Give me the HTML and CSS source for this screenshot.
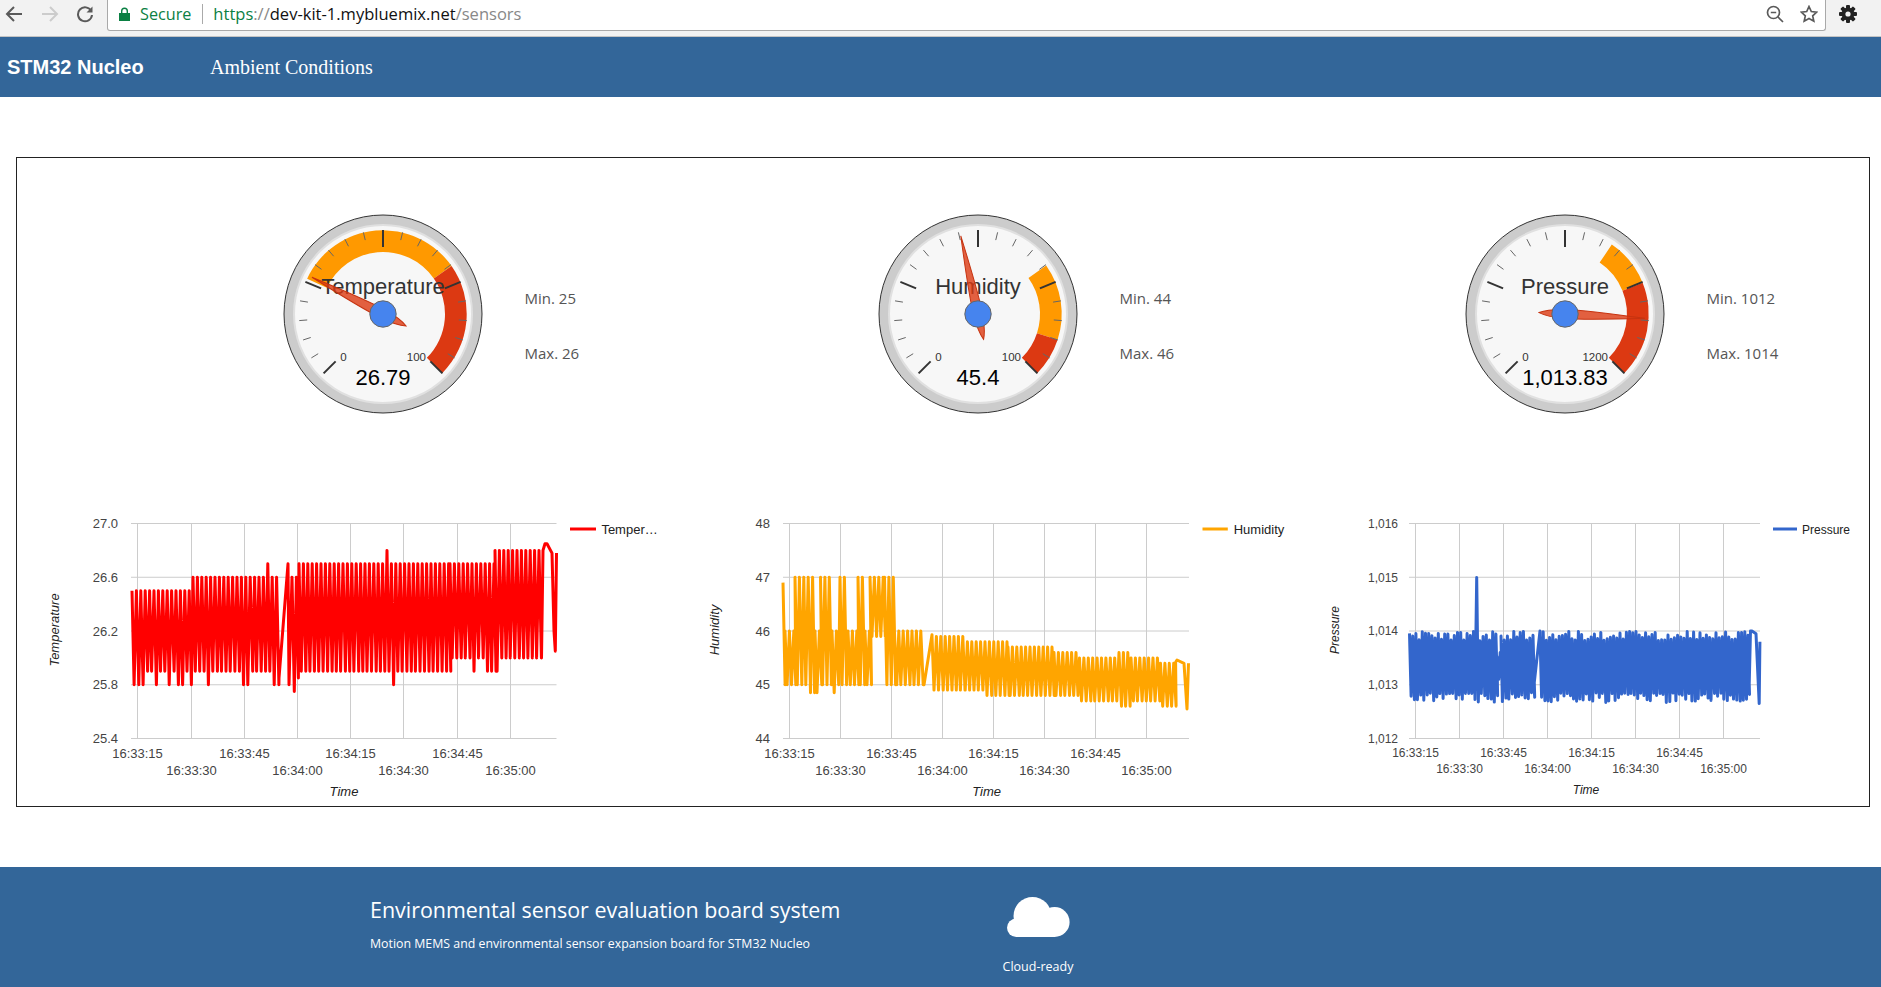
FILE: index.html
```html
<!DOCTYPE html>
<html lang="en">
<head>
  <meta charset="UTF-8">
  <title>STM32 Nucleo - Ambient Conditions</title>
  <link rel="stylesheet" href="styles.css">
</head>
<body>
  <!-- Browser toolbar -->
  <div class="toolbar">
    <div class="nav-buttons">
      <svg class="tool-icon" width="18" height="18" viewBox="0 0 18 18">
        <path class="arrow" d="M17 9H2M9 2L2 9l7 7"/>
      </svg>
      <svg class="tool-icon tool-icon-off" width="18" height="18" viewBox="0 0 18 18">
        <path class="arrow" d="M1 9h15M9 2l7 7-7 7"/>
      </svg>
      <svg class="tool-icon tool-reload" width="18" height="18" viewBox="0 0 18 18">
        <path class="arrow" d="M15.2 6A7 7 0 1 0 16 10"/>
        <path class="solid" d="M16.5 1.5v6h-6z"/>
      </svg>
    </div>
    <div class="address">
      <svg class="lock" width="11" height="14" viewBox="0 0 11 14">
        <path d="M0 6h11v8H0zM2 6V4a3.5 3.5 0 0 1 7 0v2H7.6V4a2.1 2.1 0 0 0-4.200 0v2z"/>
      </svg>
      <span class="secure">Secure</span>
      <span class="url"><span class="url-scheme">https</span><span class="url-path">://</span><span class="url-host">dev-kit-1.mybluemix.net</span><span class="url-path">/sensors</span></span>
      <svg class="address-icon" width="18" height="18" viewBox="0 0 18 18">
        <circle class="line" cx="7.500" cy="7.500" r="6"/>
        <path class="line" d="M4.800 7.500h5.400M12 12l5 5"/>
      </svg>
      <svg class="address-icon" width="18" height="18" viewBox="0 0 18 18">
        <path class="line" d="M9 1.500l2.300 5 5.400.6-4 3.700 1.100 5.400L9 13.500l-4.800 2.700 1.100-5.400-4-3.700 5.400-.6z"/>
      </svg>
    </div>
    <svg class="gear" width="18" height="18" viewBox="0 0 18 18">
      <rect x="7" y="0" width="4" height="18" rx="1"/>
      <rect x="7" y="0" width="4" height="18" rx="1" transform="rotate(45 9 9)"/>
      <rect x="7" y="0" width="4" height="18" rx="1" transform="rotate(90 9 9)"/>
      <rect x="7" y="0" width="4" height="18" rx="1" transform="rotate(135 9 9)"/>
      <circle cx="9" cy="9" r="6.500"/>
      <circle class="gear-hole" cx="9" cy="9" r="2.600"/>
    </svg>
  </div>

  <!-- Top navigation -->
  <nav class="navbar">
    <a class="brand">STM32 Nucleo</a>
    <a class="nav-link">Ambient Conditions</a>
  </nav>

  <!-- Sensors panel, filled in by sensors.js -->
  <main class="panel">
    <div class="gauges" id="gauges"></div>
    <div class="charts" id="charts"></div>
  </main>

  <footer class="footer">
    <div class="footer-text">
      <h2>Environmental sensor evaluation board system</h2>
      <p>Motion MEMS and environmental sensor expansion board for STM32 Nucleo</p>
    </div>
    <div class="feature">
      <svg class="cloud" width="63" height="40" viewBox="0 0 63 40">
        <circle cx="25.500" cy="19" r="19"/>
        <circle cx="47.600" cy="25" r="15"/>
        <circle cx="9.200" cy="30.800" r="9.200"/>
        <rect x="9" y="20" width="39" height="20"/>
      </svg>
      <span>Cloud-ready</span>
    </div>
  </footer>

  <script src="sensors.js"></script>
</body>
</html>
```

FILE: styles.css
```css
/* Root Variables */
:root {
  --primary-color: #336699;
  --text-grey: #555;
  --page-font: "Open Sans", "Noto Sans", sans-serif;
  --chart-font: "Liberation Sans", Arial, sans-serif;
}

/* Global Styles */
* {
  box-sizing: border-box;
}

body {
  margin: 0;
  padding: 0;
  height: 987px;
  overflow: hidden;
  background: #fff;
  font-family: var(--page-font);
}

/* Browser Toolbar */
.toolbar {
  display: flex;
  height: 37px;
  background: #f2f2f2;
  border-bottom: 1px solid #c4c4c4;
  align-items: flex-start;
}

.nav-buttons {
  display: flex;
  gap: 18px;
  width: 107px;
  padding: 5px 0 0 5px;
}

.tool-icon .arrow {
  fill: none;
  stroke: #5a5a5a;
  stroke-width: 2;
}

.tool-icon .solid {
  fill: #5a5a5a;
}

.tool-icon-off .arrow {
  stroke: #ccc;
}

.tool-reload {
  margin-left: -1px;
}

.address {
  display: flex;
  align-items: center;
  width: 1719px;
  height: 31px;
  padding: 0 7px 3px 11px;
  background: #fff;
  border: 1px solid #a9a9a9;
  border-top: none;
  border-radius: 0 0 3px 3px;
  font-size: 16.2px;
}

.lock {
  fill: #0b8043;
  margin-right: 10px;
}

.secure {
  color: #0b8043;
  padding-right: 11px;
  border-right: 1px solid #aaa;
  line-height: 20px;
}

.url {
  flex: 1;
  padding-left: 10px;
  font-size: 16.55px;
  white-space: nowrap;
}

.url-scheme {
  color: #0b8043;
}

.url-host {
  color: #111;
}

.url-path {
  color: #888;
}

.address-icon {
  margin-left: 16px;
}

.address-icon .line {
  fill: none;
  stroke: #5a5a5a;
  stroke-width: 1.700;
}

.gear {
  margin: 5px 0 0 13px;
  fill: #222;
}

.gear .gear-hole {
  fill: #f2f2f2;
}

/* Navigation */
.navbar {
  display: flex;
  align-items: center;
  height: 60px;
  background: var(--primary-color);
  color: #fff;
}

.brand {
  font-family: var(--chart-font);
  font-size: 20px;
  font-weight: 700;
  margin-left: 7px;
  width: 203px;
}

.nav-link {
  font-family: "Liberation Serif", "Times New Roman", serif;
  font-size: 20px;
}

/* Panel */
.panel {
  height: 650px;
  margin: 60px 11px 60px 16px;
  border: 1px solid #222;
}

.gauges {
  display: grid;
  grid-template-columns: 595px 587px 1fr;
  height: 342px;
  padding: 56px 0 0 266px;
}

.gauge-cell {
  display: flex;
  align-items: flex-start;
}

.stats {
  margin: 57px 0 0 41.5px;
  color: var(--text-grey);
  font-size: 15px;
  line-height: 55px;
  white-space: nowrap;
}

.charts {
  display: grid;
  grid-template-columns: 640px 640px 1fr;
}

.charts svg {
  display: block;
}

/* Gauge Parts */
.gauge-rim {
  fill: #ccc;
  stroke: #333;
  stroke-width: 1;
}

.gauge-face {
  fill: #f7f7f7;
  stroke: #e0e0e0;
  stroke-width: 2;
}

.zone-yellow {
  fill: #ff9900;
}

.zone-red {
  fill: #dc3912;
}

.tick-major {
  stroke: #333;
  stroke-width: 2;
}

.tick-minor {
  stroke: #666;
  stroke-width: 1;
}

.gauge-title,
.gauge-value,
.gauge-scale {
  font-family: var(--chart-font);
}

.gauge-title {
  font-size: 22px;
  fill: #333;
  text-anchor: middle;
}

.gauge-value {
  font-size: 22px;
  fill: #000;
  text-anchor: middle;
}

.gauge-scale {
  font-size: 11.5px;
  fill: #333;
}

.needle {
  fill: #dc3912;
  fill-opacity: 0.8;
  stroke: #c63310;
  stroke-width: 1;
}

.needle-hub {
  fill: #4684ee;
  stroke: #666;
  stroke-width: 1;
}

/* Chart Parts */
.chart-text {
  font-family: var(--chart-font);
  fill: #444;
}

.chart-title {
  font-family: var(--chart-font);
  font-style: italic;
  fill: #222;
}

.legend-text {
  font-family: var(--chart-font);
  fill: #222;
}

.grid-line {
  stroke: #ccc;
  stroke-width: 1;
}

.series {
  fill: none;
  stroke-width: 3;
  stroke-linejoin: round;
}

.legend-line {
  stroke-width: 3;
}

.series-temperature {
  stroke: #ff0000;
}

.series-humidity {
  stroke: #ffa500;
}

.series-pressure {
  stroke: #3366cc;
}

/* Footer */
.footer {
  display: flex;
  height: 120px;
  padding-left: 370px;
  background: var(--primary-color);
  color: #fff;
}

.footer-text {
  width: 568px;
}

.footer-text h2 {
  margin: 28px 0 0;
  font-size: 21.45px;
  font-weight: 400;
  line-height: 30px;
}

.footer-text p {
  margin: 10px 0 0;
  font-size: 12.35px;
  line-height: 18px;
}

.feature {
  display: flex;
  flex-direction: column;
  align-items: center;
  width: 200px;
  padding-top: 30px;
  font-size: 12.5px;
}

.cloud {
  fill: #fff;
  margin-bottom: 21px;
}
```

FILE: sensors.js
```js
var SVG_NS = 'http://www.w3.org/2000/svg';

function el(name, attrs, parent, text) {
  var node = document.createElementNS(SVG_NS, name);
  for (var key in attrs) node.setAttribute(key, attrs[key]);
  if (text !== undefined) node.textContent = text;
  if (parent) parent.appendChild(node);
  return node;
}

function polar(r, deg) {
  var a = deg * Math.PI / 180;
  return [r * Math.sin(a), -r * Math.cos(a)];
}

// Gauges
var gauges = [
  { title: 'Temperature', value: 26.79, label: '26.79', top: 100, min: 25, max: 26,
    zones: [['yellow', -65, 55], ['red', 55, 135]] },
  { title: 'Humidity', value: 45.4, label: '45.4', top: 100, min: 44, max: 46,
    zones: [['yellow', 54.5, 108], ['red', 108, 135]] },
  { title: 'Pressure', value: 1013.83, label: '1,013.83', top: 1200, min: 1012, max: 1014,
    zones: [['yellow', 34, 68], ['red', 68, 135]] }
];

function zonePath(from, to) {
  var a = polar(83.7, from), b = polar(83.7, to), c = polar(62, to), d = polar(62, from);
  return 'M' + a + 'A83.7 83.7 0 ' + (to - from > 180 ? 1 : 0) + ' 1 ' + b +
    'L' + c + 'A62 62 0 ' + (to - from > 180 ? 1 : 0) + ' 0 ' + d + 'Z';
}

function drawGauge(g, parent) {
  var cell = document.createElement('div');
  cell.className = 'gauge-cell';
  parent.appendChild(cell);

  var svg = el('svg', { width: 200, height: 200, viewBox: '-100 -100 200 200' }, cell);
  el('circle', { 'class': 'gauge-rim', r: 99 }, svg);
  el('circle', { 'class': 'gauge-face', r: 89 }, svg);

  g.zones.forEach(function (z) {
    el('path', { 'class': 'zone-' + z[0], d: zonePath(z[1], z[2]) }, svg);
  });

  // 5 major ticks with 4 minor ticks between each
  for (var i = 0; i <= 20; i++) {
    var deg = -135 + i * 13.5;
    var major = i % 5 === 0;
    var p1 = polar(84, deg), p2 = polar(major ? 67 : 76, deg);
    el('line', { 'class': major ? 'tick-major' : 'tick-minor',
      x1: p1[0], y1: p1[1], x2: p2[0], y2: p2[1] }, svg);
  }

  el('text', { 'class': 'gauge-title', x: 0, y: -20 }, svg, g.title);
  el('text', { 'class': 'gauge-scale', x: -42.7, y: 47 }, svg, '0');
  el('text', { 'class': 'gauge-scale', x: 43, y: 47, 'text-anchor': 'end' }, svg, String(g.top));
  el('text', { 'class': 'gauge-value', x: 0, y: 71 }, svg, g.label);

  var angle = -135 + 270 * g.value / g.top;
  el('path', { 'class': 'needle', transform: 'rotate(' + angle + ')',
    d: 'M0 -80Q5 -20 4.500 0Q4 17 0 26Q-4 17 -4.500 0Q-5 -20 0 -80Z' }, svg);
  el('circle', { 'class': 'needle-hub', r: 13.2 }, svg);

  var stats = document.createElement('div');
  stats.className = 'stats';
  stats.innerHTML = 'Min. ' + g.min + '<br>Max. ' + g.max;
  cell.appendChild(stats);
}

// Small seeded generator so the picture is the same on every load
function seeded(seed) {
  return function () {
    seed = (seed * 1664525 + 1013904223) % 4294967296;
    return seed / 4294967296;
  };
}

function inRanges(x, ranges) {
  return (ranges || []).some(function (r) { return x >= r[0] - 1 && x <= r[1] + 1; });
}

// Turn blocks of [x0, x1, high, low] into a zig-zag of samples
function samples(s) {
  var pts = [];
  var rnd = seeded(s.seed);
  s.blocks.forEach(function (b) {
    if (b.length === 2) { pts.push(b); return; }
    for (var x = b[0]; x < b[1]; x += s.step) {
      var high = b[2], low = b[3];
      if (inRanges(x, s.dips)) low -= s.dipBy;
      (s.peaks || []).forEach(function (p) {
        if (Math.abs(p[0] - x) < s.step / 2) high = p[1];
      });
      if (s.jitter) {
        high -= rnd() * s.jitter;
        low -= rnd() * s.jitter;
      }
      // the low sample lands a little off-centre, so the slivers differ in length
      pts.push([x, high]);
      pts.push([x + s.step * (0.44 + rnd() * 0.12), low]);
    }
  });
  return pts;
}

var charts = [
  { name: 'temperature', width: 640, font: 13, yTitle: 'Temperature', ticks: ['25.4', '25.8', '26.2', '26.6', '27.0'],
    yMin: 25.4, yMax: 27, left: 114, right: 539.5, firstTick: 120.3, tickGap: 53.2,
    labelRight: 101, titleX: 42, timeX: 327, timeY: 295.7, rowY: [257.7, 275],
    legend: [553, 579, 584.4], legendText: 'Temper\u2026',
    step: 4.4, dipBy: 0.1, seed: 7,
    dips: [[114, 125], [137.5, 137.5], [151, 151], [159, 165], [173, 173], [186.5, 190.5], [209, 209], [222.4, 230.6],
      [245, 245], [254, 263], [271, 275], [284.4, 284.4], [298, 298], [320, 320], [373.4, 373.4], [454, 454], [467, 480]],
    peaks: [[251, 26.7], [371, 26.8]],
    blocks: [[115, 176, 26.5, 25.9], [176, 260, 26.6, 25.9], [262, 25.85], [271, 26.7], [272, 25.8],
      [275, 282, 26.6, 25.85], [282, 433, 26.7, 25.9], [433, 478, 26.7, 26.0], [478, 523, 26.8, 26.0],
      [524.5, 26.0], [526, 26.8], [528, 26.85], [530, 26.85], [535, 26.78], [537, 26.2], [538.3, 26.05], [539.5, 26.78]] },
  { name: 'humidity', width: 640, font: 13, yTitle: 'Humidity', ticks: ['44', '45', '46', '47', '48'],
    yMin: 44, yMax: 48, left: 126, right: 532, firstTick: 131.5, tickGap: 51,
    labelRight: 113, titleX: 61.5, timeX: 329.6, timeY: 295.7, rowY: [257.7, 275],
    legend: [545.5, 570.8, 576.7], legendText: 'Humidity',
    step: 4.4, dipBy: 0.15, seed: 11,
    dips: [[150, 160], [176, 178]],
    blocks: [[126, 128, 46.9, 45], [128, 138, 46, 45], [138, 158, 47, 45], [158, 163.5, 46, 45],
      [163.5, 175, 47, 45], [175, 183, 46, 45], [183, 191, 47, 45], [191, 201, 46, 45], [201, 208, 47, 45],
      [208, 213, 46, 45], [213, 227.5, 47, 45.9], [227.5, 237.4, 47, 45], [237.4, 267, 46, 45], [267, 45], [275, 45.93],
      [275, 306, 45.9, 44.9], [306, 328, 45.8, 44.9], [328, 351, 45.8, 44.8], [351, 397, 45.7, 44.8],
      [397, 422.5, 45.6, 44.8], [422.5, 462, 45.5, 44.7], [462, 474, 45.6, 44.6], [474, 503.5, 45.5, 44.7],
      [503.5, 517.4, 45.4, 44.6], [518.6, 45.42], [520, 45.46], [527, 45.4], [530, 44.55], [531.5, 45.4]] },
  { name: 'pressure', width: 572, font: 12, yTitle: 'Pressure', ticks: ['1,012', '1,013', '1,014', '1,015', '1,016'],
    yMin: 1012, yMax: 1016, left: 112, right: 463, firstTick: 118, tickGap: 43.98,
    labelRight: 101, titleX: 41.8, timeX: 289, timeY: 294, rowY: [257, 272.7],
    legend: [476, 500, 505], legendText: 'Pressure',
    step: 3.2, dipBy: 0, seed: 23, jitter: 0.18,
    peaks: [[178.7, 1015]],
    blocks: [[112.5, 200, 1014, 1012.85], [200, 204, 1013.7, 1013.15], [204, 236, 1014, 1012.85],
      [237, 1013.0], [243, 1014.0], [243, 451, 1014, 1012.85], [452, 1012.85], [453.5, 1014], [455, 1014],
      [459, 1013.95], [462.2, 1012.65], [462.9, 1013.8]] }
];

function drawChart(c, parent) {
  var top = 23.5, bottom = 238.5;
  var svg = el('svg', { width: c.width, height: 306, viewBox: '0 0 ' + c.width + ' 306' }, parent);
  var y = function (v) { return bottom - (v - c.yMin) / (c.yMax - c.yMin) * (bottom - top); };
  var times = ['16:33:15', '16:33:30', '16:33:45', '16:34:00', '16:34:15', '16:34:30', '16:34:45', '16:35:00'];

  c.ticks.forEach(function (label, i) {
    var gy = bottom - i * (bottom - top) / 4;
    el('line', { 'class': 'grid-line', x1: c.left, x2: c.right, y1: gy, y2: gy }, svg);
    el('text', { 'class': 'chart-text', x: c.labelRight, y: gy + c.font * 0.36, 'text-anchor': 'end',
      'font-size': c.font }, svg, label);
  });

  times.forEach(function (label, i) {
    var gx = Math.round(c.firstTick + i * c.tickGap) + 0.5;
    el('line', { 'class': 'grid-line', x1: gx, x2: gx, y1: top, y2: bottom }, svg);
    el('text', { 'class': 'chart-text', x: gx, y: c.rowY[i % 2], 'text-anchor': 'middle',
      'font-size': c.font }, svg, label);
  });

  var line = samples(c).map(function (p) { return p[0].toFixed(1) + ' ' + y(p[1]).toFixed(1); });
  el('path', { 'class': 'series series-' + c.name, d: 'M' + line.join('L') }, svg);

  el('line', { 'class': 'legend-line series-' + c.name, x1: c.legend[0], x2: c.legend[1], y1: 29, y2: 29 }, svg);
  el('text', { 'class': 'legend-text', x: c.legend[2], y: 34, 'font-size': c.font }, svg, c.legendText);

  el('text', { 'class': 'chart-title', x: c.timeX, y: c.timeY, 'text-anchor': 'middle', 'font-size': c.font }, svg, 'Time');
  el('text', { 'class': 'chart-title', 'text-anchor': 'middle', 'font-size': c.font,
    transform: 'translate(' + c.titleX + ' 130) rotate(-90)' }, svg, c.yTitle);
}

gauges.forEach(function (g) { drawGauge(g, document.getElementById('gauges')); });
charts.forEach(function (c) { drawChart(c, document.getElementById('charts')); });
```
